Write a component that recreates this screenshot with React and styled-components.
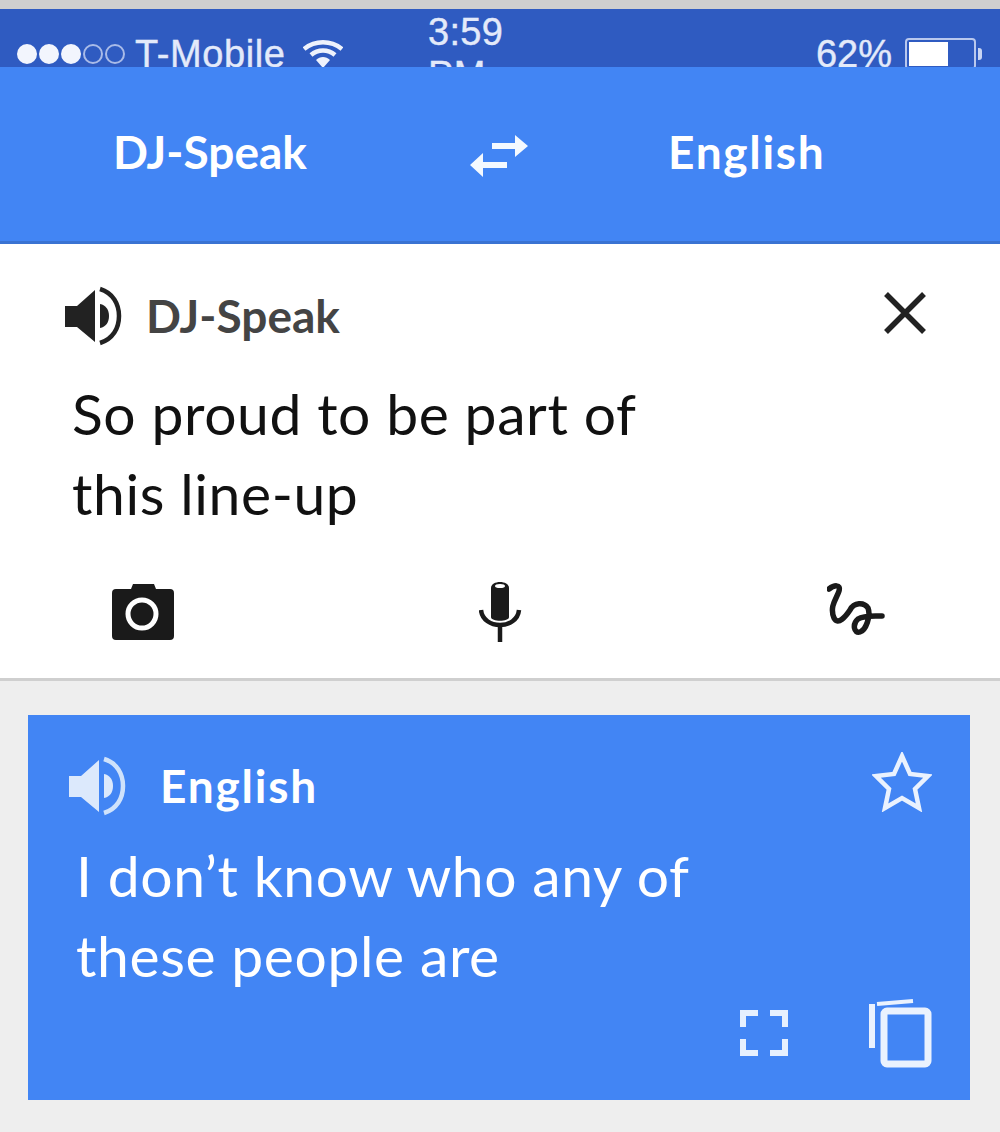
import React from 'react';
import styled, { createGlobalStyle } from 'styled-components';

const GlobalStyle = createGlobalStyle`
  html, body {
    margin: 0;
    padding: 0;
    background: #eeeeee;
  }
`;

const Page = styled.div`
  width: 1000px;
  height: 1132px;
  overflow: hidden;
  background: #eeeeee;
  font-family: Lato, "Noto Sans", sans-serif;
  display: flex;
  flex-direction: column;
`;

const TopEdge = styled.div`
  height: 9px;
  background: #cfcfcf;
`;

const StatusBar = styled.div`
  height: 58px;
  background: #2f5bc1;
  color: #e3eafa;
  font-family: "Liberation Sans", Arial, sans-serif;
  font-size: 38px;
  -webkit-text-stroke: 0.4px #e3eafa;
  display: grid;
  grid-template-columns: 395px 1fr 420px;
  align-items: center;
  box-sizing: border-box;
  padding: 2px 18px 0 17px;
`;

const StatusLeft = styled.div`
  display: flex;
  align-items: center;
`;

const Dots = styled.div`
  display: flex;
  gap: 2px;
  margin-right: 10px;
`;

const Dot = styled.span`
  width: 20px;
  height: 20px;
  box-sizing: border-box;
  border-radius: 50%;
  background: ${(p) => (p.$on ? '#f2f5fd' : 'transparent')};
  border: 2px solid ${(p) => (p.$on ? '#f2f5fd' : '#a9bbe8')};
`;

const Carrier = styled.span`
  letter-spacing: 0.6px;
  margin-right: 17px;
`;

const Clock = styled.span`
  margin-left: 16px;
  letter-spacing: 0.3px;
`;

const StatusRight = styled.div`
  display: flex;
  align-items: center;
  justify-content: flex-end;
  gap: 13px;
`;

const Battery = styled.div`
  display: flex;
  align-items: center;
  gap: 2px;
`;

const BatteryBody = styled.div`
  width: 71px;
  height: 32px;
  box-sizing: border-box;
  border: 2px solid #b9c8ee;
  border-radius: 4px;
  padding: 2px;
  display: flex;
`;

const BatteryFill = styled.div`
  background: #ffffff;
  height: 100%;
`;

const BatteryTip = styled.div`
  width: 4px;
  height: 12px;
  background: #c9d5f3;
  border-radius: 0 3px 3px 0;
`;

const LanguageBar = styled.header`
  height: 174px;
  background: #4285f4;
  border-bottom: 3px solid #3a73d2;
  color: #ffffff;
  display: grid;
  grid-template-columns: 113px 355px 200px 1fr;
  align-items: center;
  box-sizing: content-box;
`;

const BarLanguage = styled.div`
  grid-column: ${(p) => p.$col};
  font-size: 46px;
  font-weight: 700;
  letter-spacing: ${(p) => p.$track}px;
  line-height: 1;
  margin-bottom: 4px;
`;

const SwapIcon = styled.svg`
  grid-column: 3;
  width: 62px;
  height: 48px;
  margin-top: 4px;
`;

const SourcePanel = styled.section`
  height: 434px;
  background: #ffffff;
  border-bottom: 3px solid #cfcfcf;
  box-sizing: content-box;
  display: flex;
  flex-direction: column;
`;

const PanelHead = styled.div`
  display: flex;
  align-items: center;
  justify-content: space-between;
  padding: 44px 72px 0 62px;
  height: 56px;
`;

const HeadLabel = styled.div`
  display: flex;
  align-items: center;
  gap: ${(p) => p.$gap}px;
`;

const LanguageName = styled.span`
  font-size: 46px;
  font-weight: 700;
  letter-spacing: ${(p) => p.$track}px;
  color: ${(p) => p.$color};
  line-height: 1;
`;

const CloseIcon = styled.svg`
  width: 46px;
  height: 46px;
  margin-bottom: 6px;
`;

const BodyText = styled.p`
  margin: ${(p) => p.$margin};
  font-size: 57px;
  font-weight: 400;
  line-height: 80px;
  letter-spacing: 0.6px;
  color: ${(p) => p.$color};
`;

const ToolRow = styled.div`
  margin-top: auto;
  padding: 0 115px 36px 112px;
  display: flex;
  align-items: center;
  justify-content: space-between;
`;

const CardArea = styled.div`
  padding: 34px 30px 0 28px;
`;

const Card = styled.section`
  height: 385px;
  background: #4285f4;
  box-sizing: border-box;
  padding: 36px 38px 0 38px;
  position: relative;
  display: flex;
  flex-direction: column;
`;

const CardHead = styled.div`
  display: flex;
  align-items: center;
  justify-content: space-between;
  height: 70px;
`;

const StarIcon = styled.svg`
  width: 60px;
  height: 60px;
  margin-bottom: 8px;
`;

const CardActions = styled.div`
  margin-top: auto;
  padding-bottom: 32px;
  display: flex;
  justify-content: flex-end;
  align-items: center;
  gap: 80px;
`;

const Speaker = ({ fill, arc }) => (
  <svg width="60" height="60" viewBox="0 0 60 60">
    <path d="M3 20h12L33 4v52L15 41H3z" fill={fill} />
    <path d="M38 18c6 1 9 6 9 12s-3 11-9 12z" fill={fill} />
    <path d="M38 3c13 4 19 15 19 27s-6 23-19 27" fill="none" stroke={arc} strokeWidth="4.5" />
  </svg>
);

const App = () => (
  <Page>
    <GlobalStyle />
    <TopEdge />
    <StatusBar>
      <StatusLeft>
        <Dots>
          <Dot $on />
          <Dot $on />
          <Dot $on />
          <Dot />
          <Dot />
        </Dots>
        <Carrier>T-Mobile</Carrier>
        <svg width="40" height="28" viewBox="0 0 40 28">
          <path d="M1 9c11-9 27-9 38 0M8 15c7-6 17-6 24 0" fill="none" stroke="#eef2fc" strokeWidth="4.5" />
          <path d="M13 20c4-4 10-4 14 0l-7 8z" fill="#eef2fc" />
        </svg>
      </StatusLeft>
      <Clock>3:59 PM</Clock>
      <StatusRight>
        <span>62%</span>
        <Battery>
          <BatteryBody>
            <BatteryFill style={{ width: '62%' }} />
          </BatteryBody>
          <BatteryTip />
        </Battery>
      </StatusRight>
    </StatusBar>

    <LanguageBar>
      <BarLanguage $col={2} $track={0}>DJ-Speak</BarLanguage>
      <SwapIcon viewBox="0 0 62 48">
        <path d="M24 11h23V3l13 11-13 11v-8H24z" fill="#f4f9ff" />
        <path d="M39 30H15v-9L2 33l13 12v-9h24z" fill="#f4f9ff" />
      </SwapIcon>
      <BarLanguage $col={4} $track={1.7}>English</BarLanguage>
    </LanguageBar>

    <SourcePanel>
      <PanelHead>
        <HeadLabel $gap={24}>
          <Speaker fill="#222222" arc="#222222" />
          <LanguageName $track={0} $color="#444444">DJ-Speak</LanguageName>
        </HeadLabel>
        <CloseIcon viewBox="0 0 46 46">
          <path d="M4 4l38 38M42 4L4 42" stroke="#222222" strokeWidth="5.5" fill="none" />
        </CloseIcon>
      </PanelHead>
      <BodyText $margin="29px 0 0 72px" $color="#111111">
        So proud to be part of
        <br />
        this line-up
      </BodyText>
      <ToolRow>
        <svg width="62" height="56" viewBox="0 0 62 56">
          <path d="M4 5h15l2-5h21l2 5h14a4 4 0 0 1 4 4v43a4 4 0 0 1-4 4H4a4 4 0 0 1-4-4V9a4 4 0 0 1 4-4z" fill="#1a1a1a" />
          <circle cx="30" cy="30" r="14" fill="none" stroke="#ffffff" strokeWidth="5" />
        </svg>
        <svg width="44" height="60" viewBox="0 0 44 60">
          <path d="M12 6c0-8 18-8 18 0v29c0 5-18 5-18 0z" fill="#1a1a1a" />
          <ellipse cx="21" cy="4" rx="5" ry="2" fill="#ffffff" />
          <path d="M2 28c2 20 36 20 38 0" fill="none" stroke="#1a1a1a" strokeWidth="4.500" />
          <path d="M21 42v18" stroke="#1a1a1a" strokeWidth="4.500" />
        </svg>
        <svg width="58" height="58" viewBox="13 9 58 58">
          <path d="M15 15C20 11 27 10 25 17C23 24 15 32 20 44C24 52 32 42 36 36C40 28 50 28 54 34C57 42 52 56 46 58C40 60 38 50 44 45C50 41 60 42 68 42" fill="none" stroke="#1a1a1a" strokeWidth="5.500" strokeLinecap="round" />
        </svg>
      </ToolRow>
    </SourcePanel>

    <CardArea>
      <Card>
        <CardHead>
          <HeadLabel $gap={34}>
            <Speaker fill="#dce9fc" arc="#cfe2fb" />
            <LanguageName $track={1.8} $color="#ffffff">English</LanguageName>
          </HeadLabel>
          <StarIcon viewBox="0 0 60 60">
            <path d="M30 4l8 18 18 2-13 13 4 19-17-10-17 10 4-19L4 24l18-2z" fill="none" stroke="#eaf2fe" strokeWidth="4.500" />
          </StarIcon>
        </CardHead>
        <BodyText $margin="14px 0 0 10px" $color="#ffffff">
          I don’t know who any of
          <br />
          these people are
        </BodyText>
        <CardActions>
          <svg width="48" height="46" viewBox="0 0 48 46">
            <path d="M3 17V3h15M30 3h15v14M3 29v14h15M30 43h15V29" fill="none" stroke="#e6f0fe" strokeWidth="6" />
          </svg>
          <svg width="64" height="70" viewBox="0 0 64 70">
            <path d="M4 6v44" stroke="#eaf2fe" strokeWidth="6" fill="none" />
            <path d="M9 6l36-3" stroke="#eaf2fe" strokeWidth="4" fill="none" />
            <rect x="16" y="13" width="44" height="53" rx="3" fill="none" stroke="#eaf2fe" strokeWidth="7" />
          </svg>
        </CardActions>
      </Card>
    </CardArea>
  </Page>
);

export default App;
